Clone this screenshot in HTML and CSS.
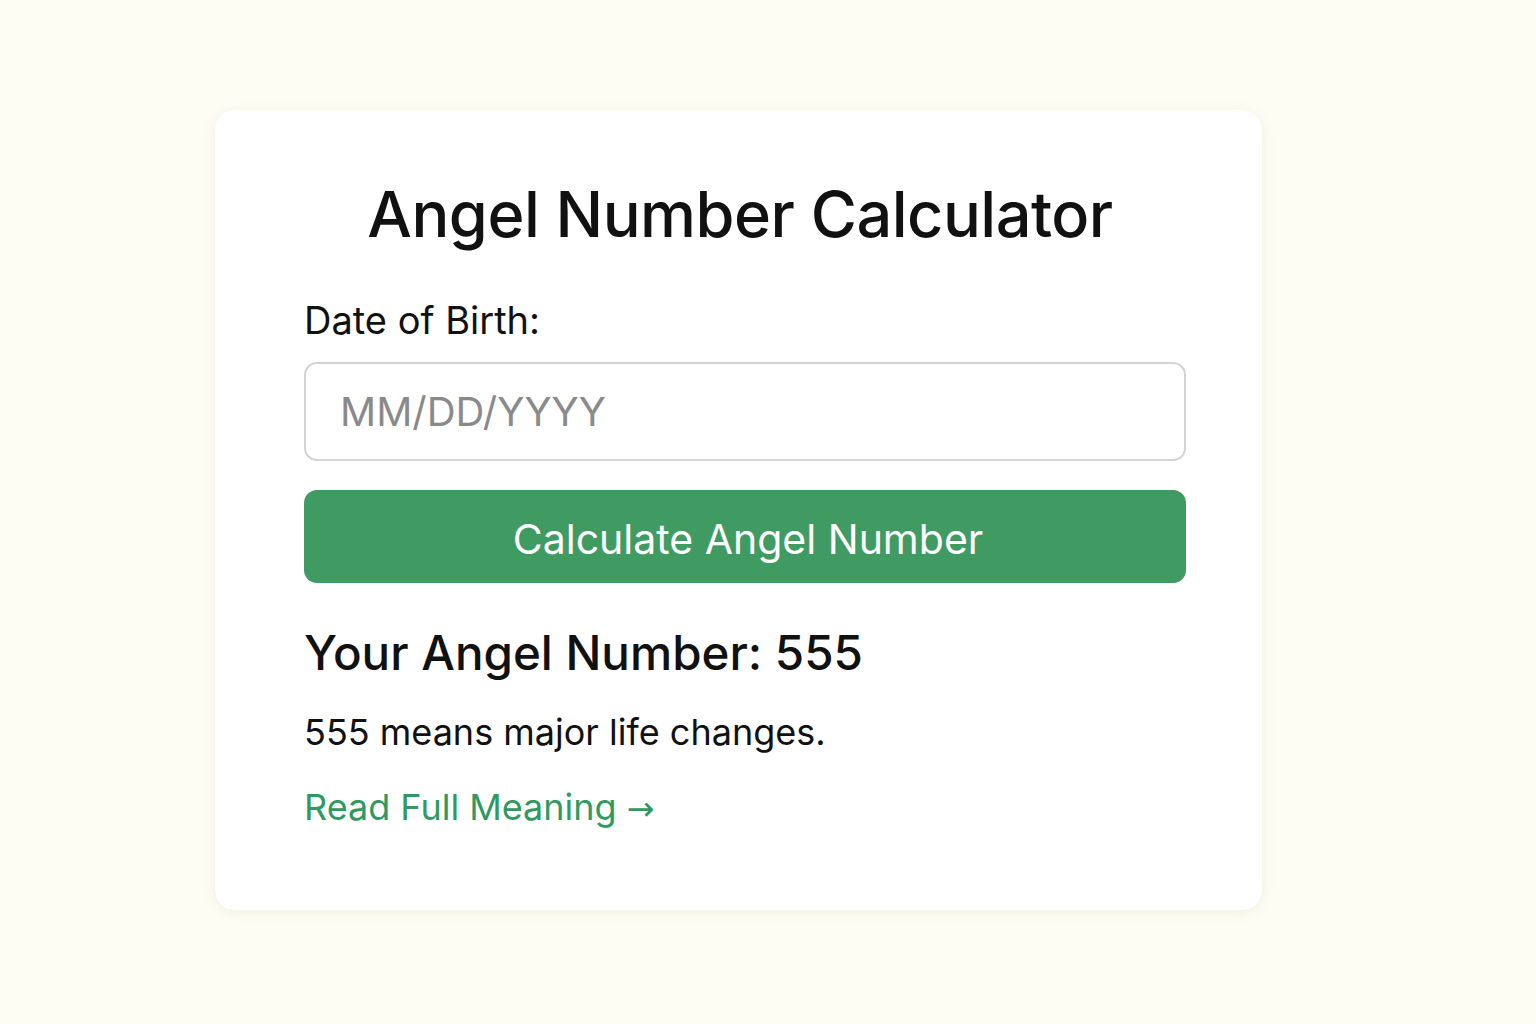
FILE: index.html
```html
<!DOCTYPE html>
<html lang="en">
<head>
<meta charset="utf-8">
<title>Angel Number Calculator</title>
<link rel="stylesheet" href="styles.css">
</head>
<body>
<main class="page">
  <section class="card">
    <h1 class="title">Angel Number Calculator</h1>
    <label class="label" for="dob">Date of Birth:</label>
    <input class="input" id="dob" type="text" placeholder="MM/DD/YYYY">
    <button class="btn" type="button">Calculate Angel Number</button>
    <h2 class="result">Your Angel Number: 555</h2>
    <p class="desc">555 means major life changes.</p>
    <a class="link" href="#">Read Full Meaning <span class="arrow">→</span></a>
  </section>
</main>
</body>
</html>
```

FILE: styles.css
```css
* { box-sizing: border-box; }
html, body {
  margin: 0;
  padding: 0;
  background: #fefdf4;
  font-family: "Inter", "Noto Sans", sans-serif;
  color: #111;
}
.page {
  width: 1536px;
  height: 1024px;
  display: flex;
  align-items: flex-start;
  padding-top: 110px;
  padding-left: 215px;
}
.card {
  width: 1047px;
  height: 800px;
  background: #fff;
  border-radius: 20px;
  box-shadow: 0 2px 12px rgba(200, 195, 160, 0.25);
  padding: 0 76px 0 89px;
  display: flex;
  flex-direction: column;
}
.title {
  margin: 70px 0 0;
  padding-right: 10px;
  font-size: 63px;
  font-weight: 500;
  text-align: center;
  letter-spacing: -0.5px;
  line-height: 68px;
}
.label {
  margin-top: 50px;
  font-size: 38px;
  line-height: 44px;
  font-weight: 400;
}
.input {
  margin-top: 20px;
  height: 99px;
  width: 882px;
  border: 2px solid #d3d3d3;
  border-radius: 13px;
  padding: 0 34px;
  font-family: inherit;
  font-size: 40px;
  color: #333;
  background: #fff;
}
.input::placeholder { color: #8a8a8a; }
.btn {
  margin-top: 29px;
  height: 93px;
  width: 882px;
  border: none;
  border-radius: 13px;
  background: #409b63;
  color: #fff;
  font-family: inherit;
  font-size: 41px;
  font-weight: 400;
  padding: 4px 0 0 6px;
}
.result {
  margin: 40px 0 0;
  font-size: 47.5px;
  line-height: 60px;
  font-weight: 500;
}
.desc {
  margin: 27px 0 0;
  font-size: 36px;
  line-height: 44px;
}
.link {
  margin-top: 30px;
  font-size: 36px;
  line-height: 46px;
  color: #2f9a5f;
  text-decoration: none;
  align-self: flex-start;
}
.arrow {
  font-family: "DejaVu Sans", sans-serif;
  font-size: 33px;
}
```
